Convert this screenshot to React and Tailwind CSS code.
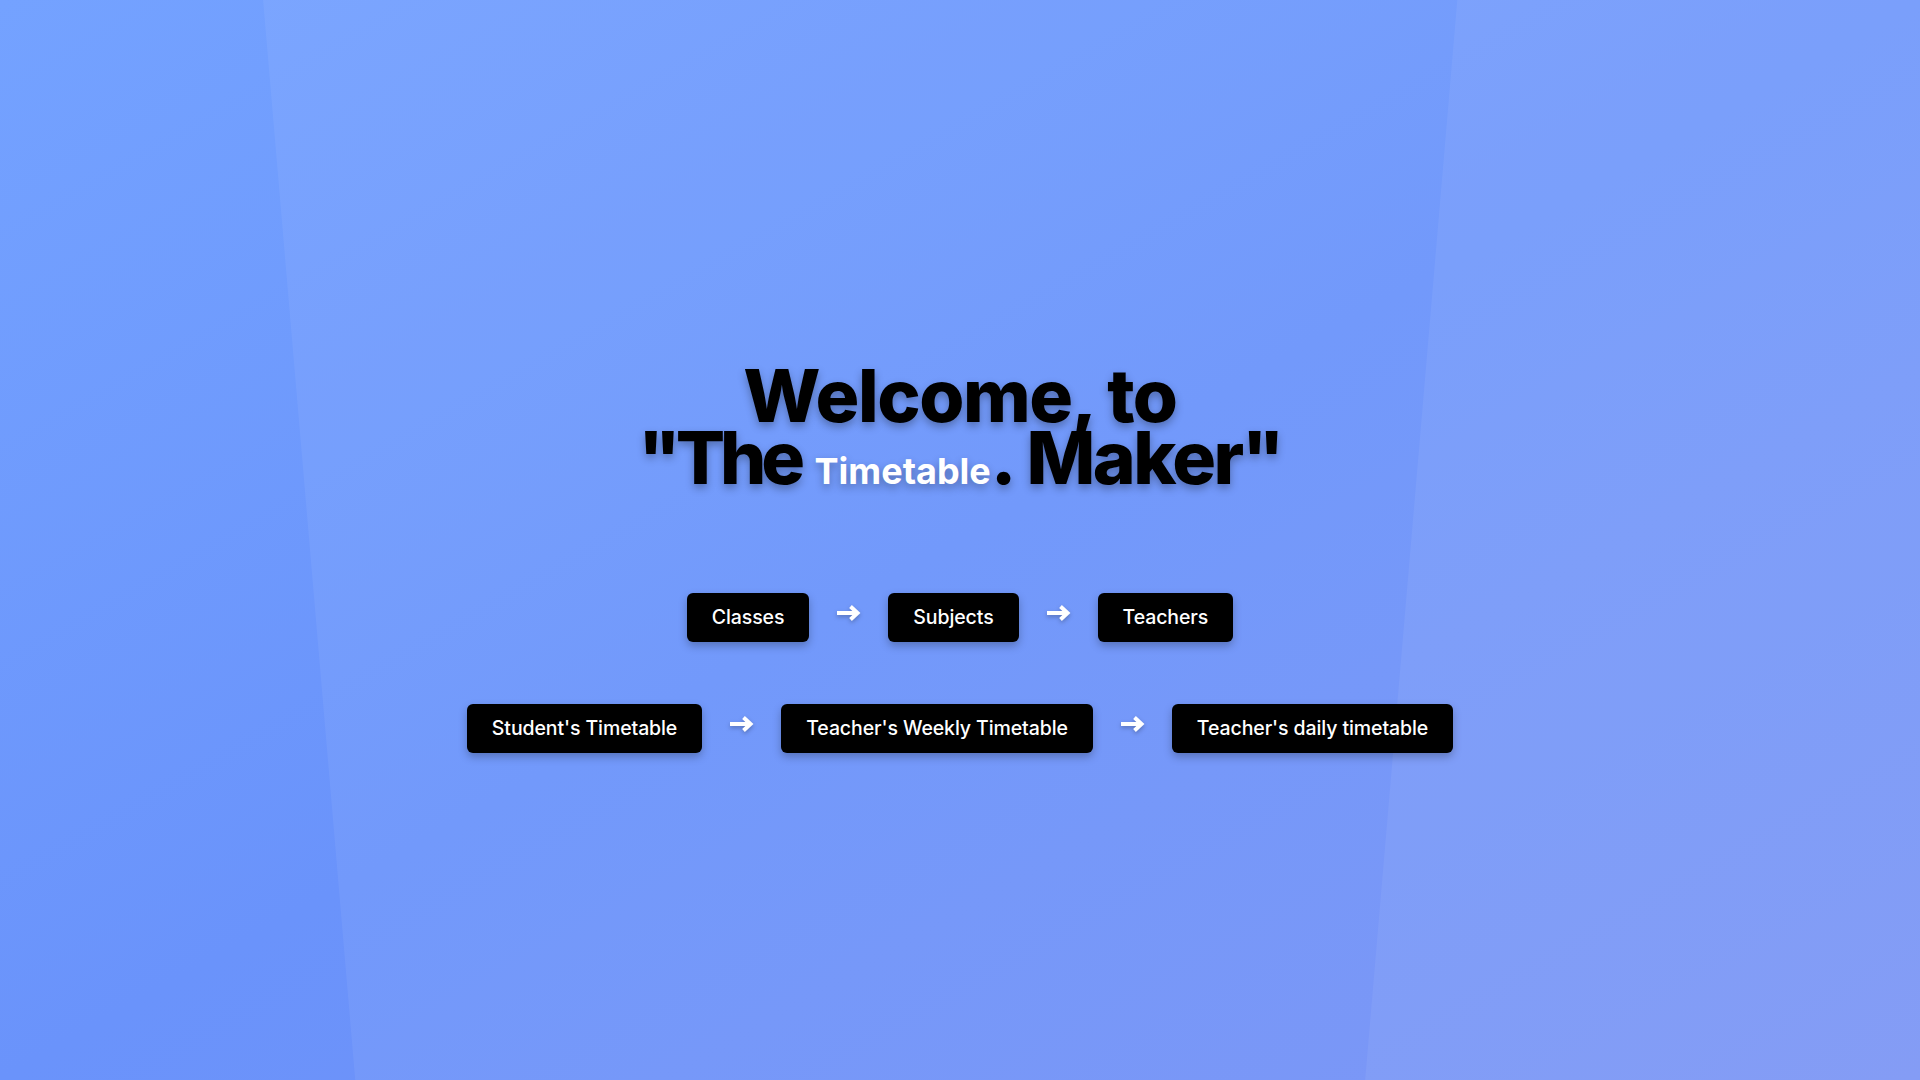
import React from "react";

const steps = [
    ["Classes", "Subjects", "Teachers"],
    ["Student's Timetable", "Teacher's Weekly Timetable", "Teacher's daily timetable"],
];

const Arrow = () => (
    <svg width="25" height="16" viewBox="0 0 25 16" className="drop-shadow-[0_2px_2px_rgba(0,0,0,0.25)] -mt-2.5" fill="none">
        <path d="M1 8 H21" stroke="white" strokeWidth="4" />
        <path d="M14.5 1.5 L21.5 8 L14.5 14.5" stroke="white" strokeWidth="4" strokeLinejoin="miter" />
    </svg>
);

const App = () => {
    return (
        <div className="relative h-screen w-full overflow-hidden bg-gradient-to-br from-[#74a2ff] via-[#6a93fb] to-[#7590f5] font-['Inter',sans-serif]">

            {/* decorative panels */}
            <div className="absolute inset-0 bg-white/[0.06] [clip-path:polygon(13.7%_0,100%_0,100%_100%,18.5%_100%)]" />
            <div className="absolute inset-0 bg-white/[0.06] [clip-path:polygon(75.9%_0,100%_0,100%_100%,71.1%_100%)]" />

            <div className="relative flex h-full flex-col items-center justify-center pt-[38px]">

                <h1 className="text-center text-[73px] font-extrabold leading-[62px] tracking-[-0.02em] text-black [text-shadow:0_4px_8px_rgba(0,0,0,0.3)]">
                    Welcome, to
                    <br />
                    <span className="tracking-[-0.07em]">"The</span>{" "}
                    <span className="text-[36px] leading-none font-bold tracking-normal text-white">Timetable</span>.{" "}
                    <span className="tracking-[-0.035em]">Maker"</span>
                </h1>

                <div className="mt-[104px] flex flex-col items-center gap-[62px]">
                    {steps.map((row, i) => (
                        <div key={i} className="flex items-center gap-[27px]">
                            {row.map((label, j) => (
                                <React.Fragment key={label}>
                                    {j > 0 && <Arrow />}
                                    <button className="rounded-md bg-black px-[25px] py-2.5 text-[19.5px] font-medium leading-[29px] tracking-[-0.005em] text-white shadow-[0_4px_8px_rgba(0,0,0,0.25)]">
                                        {label}
                                    </button>
                                </React.Fragment>
                            ))}
                        </div>
                    ))}
                </div>

            </div>
        </div>
    );
};

export default App;
